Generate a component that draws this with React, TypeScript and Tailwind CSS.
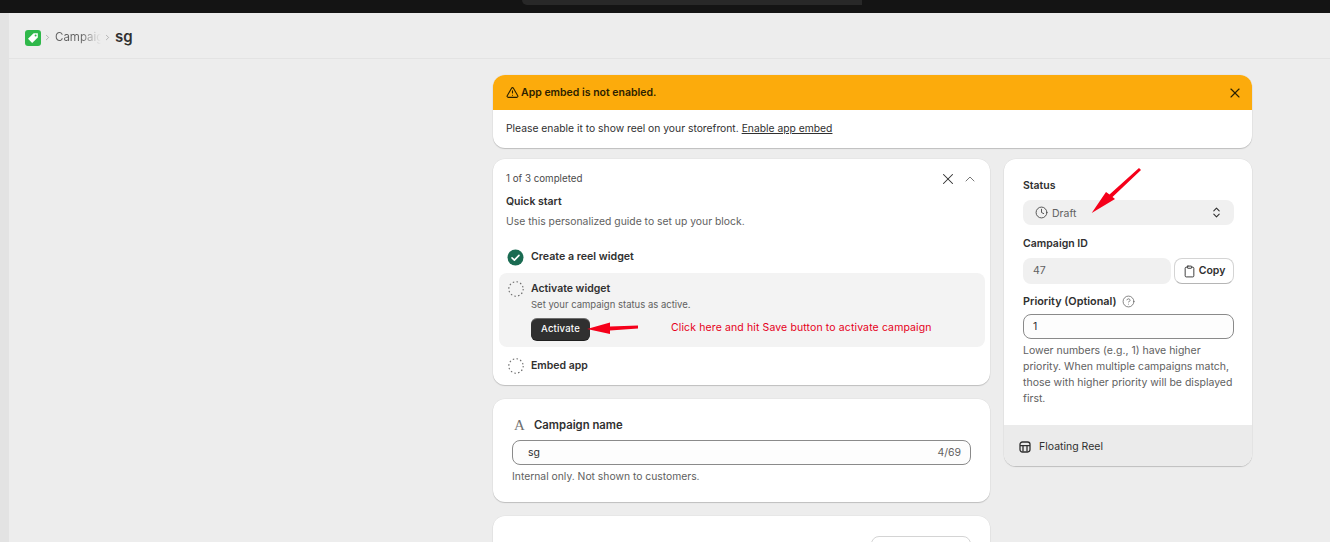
import React from 'react';
import { X, ChevronUp, ChevronRight, Clock, ChevronsUpDown, Clipboard, CircleHelp, TriangleAlert } from 'lucide-react';

const DashedCircle: React.FC = () => (
  <svg width="16" height="16" viewBox="0 0 16 16" fill="none" className="shrink-0">
    <circle cx="8" cy="8" r="7.2" stroke="#6b6b6b" strokeWidth="1.1" strokeDasharray="1.5 2.3" />
  </svg>
);

const Card: React.FC<{ className?: string; children: React.ReactNode }> = ({ className = '', children }) => (
  <div className={`bg-white rounded-xl shadow-[0_1px_1px_rgba(0,0,0,0.18),0_0_0_0.5px_rgba(0,0,0,0.05)] ${className}`}>{children}</div>
);

const Banner: React.FC = () => (
  <Card className="overflow-hidden h-[73px]">
    <div className="h-[35px] bg-[#fcab0c] flex items-center pl-[13px] pr-[9px]">
      <TriangleAlert size={13} strokeWidth={2} className="text-[#2b2100]" />
      <span className="ml-[2px] font-semibold text-[#2b2100]">App embed is not enabled.</span>
      <X size={16} strokeWidth={1.7} className="ml-auto text-[#2b2100]" />
    </div>
    <div className="h-[38px] flex items-center px-[13px] text-[10.32px] text-[#303030]">
      <span>Please enable it to show reel on your storefront.&nbsp;</span>
      <span className="underline">Enable app embed</span>
    </div>
  </Card>
);

const QuickStart: React.FC = () => (
  <Card className="h-[226px] pl-[6px] pr-[5px] pt-[13px]">
    <div className="flex items-center justify-between pl-[7px] pr-[7px] text-[9.75px] h-[14px] text-[#4a4a4a]">
      <span>1 of 3 completed</span>
      <div className="flex items-center gap-[5px]">
        <X size={18} strokeWidth={1.4} className="text-[#303030]" />
        <ChevronUp size={16} strokeWidth={1.3} className="text-[#616161]" />
      </div>
    </div>
    <div className="pl-[7px] mt-[8px] font-semibold text-[#303030] h-[16px] leading-[16px]">Quick start</div>
    <div className="pl-[7px] mt-[4px] text-[10.37px] text-[#616161] h-[16px] leading-[16px]">Use this personalized guide to set up your block.</div>
    <div className="pl-[8px] mt-[19px] flex items-center h-[16px]">
      <svg width="17" height="17" viewBox="0 0 17 17" className="shrink-0">
        <circle cx="8.5" cy="8.5" r="8" fill="#1a6b52" />
        <path d="M5 8.8l2.4 2.3L12 6.4" stroke="#fff" strokeWidth="1.6" fill="none" strokeLinecap="round" strokeLinejoin="round" />
      </svg>
      <span className="ml-[7px] font-semibold text-[10.65px] text-[#303030]">Create a reel widget</span>
    </div>
    <div className="mt-[8px] h-[74px] rounded-lg bg-[#f3f3f3] pl-[9px] pt-[7px] flex">
      <div className="pt-[1px]"><DashedCircle /></div>
      <div className="ml-[7px] pt-[1px]">
        <div className="font-semibold text-[#303030] h-[16px] leading-[16px]">Activate widget</div>
        <div className="text-[9.5px] text-[#616161] h-[16px] leading-[16px]">Set your campaign status as active.</div>
        <div className="mt-[5px] flex items-center">
          <button className="w-[59px] h-[22px] rounded-md bg-[#303030] text-white text-[9.5px] font-medium tracking-[0.2px] shadow-[inset_0_1px_0_rgba(255,255,255,0.3),0_1px_0_#1f1f1f]">Activate</button>
          <span className="ml-[81px] -mt-[3px] text-[#e6001a] text-[10.5px] tracking-[0.12px]">Click here and hit Save button to activate campaign</span>
        </div>
      </div>
    </div>
    <div className="pl-[9px] mt-[11px] flex items-center h-[16px]">
      <DashedCircle />
      <span className="ml-[7px] font-semibold text-[#303030]">Embed app</span>
    </div>
  </Card>
);

const CampaignName: React.FC = () => (
  <Card className="h-[103px] px-[19px] pt-[18px]">
    <div className="flex items-center h-[16px]">
      <span className="text-[15px] text-[#707070] font-['Liberation_Serif',serif] w-[22px] pl-[2px]">A</span>
      <span className="font-semibold text-[#303030] text-[11.3px]">Campaign name</span>
    </div>
    <div className="mt-[7px] h-[25px] rounded-lg border border-[#8a8a8a] bg-[#fdfdfd] flex items-center justify-between pl-[15px] pr-[9px] text-[#303030]">
      <span>sg</span>
      <span className="text-[#616161]">4/69</span>
    </div>
    <div className="mt-[3px] text-[10.33px] text-[#616161] h-[16px] leading-[16px]">Internal only. Not shown to customers.</div>
  </Card>
);

const SideCard: React.FC = () => (
  <Card className="w-[248px] h-[307px] overflow-hidden flex flex-col">
    <div className="flex-1 pl-[19px] pr-[18px] pt-[19px]">
      <div className="font-semibold text-[#303030] h-[16px] leading-[16px]">Status</div>
      <div className="mt-[6px] h-[25px] rounded-lg bg-[#f0f0f0] flex items-center pl-[12px] pr-[11px] text-[#616161]">
        <Clock size={13} strokeWidth={1.7} className="text-[#4a4a4a]" />
        <span className="ml-[4px] mt-[2px]">Draft</span>
        <ChevronsUpDown size={13} strokeWidth={2} className="ml-auto text-[#303030]" />
      </div>
      <div className="mt-[11px] font-semibold text-[#303030] h-[16px] leading-[16px]">Campaign ID</div>
      <div className="mt-[6px] flex gap-[3px]">
        <div className="w-[148px] h-[26px] rounded-lg bg-[#f0f0f0] flex items-center pl-[10px] text-[#616161]">47</div>
        <button className="w-[60px] h-[26px] rounded-lg bg-white border border-[#d4d4d4] border-b-[#b5b5b5] flex items-center justify-center gap-[3px] font-semibold text-[#303030]">
          <Clipboard size={13} strokeWidth={1.7} />
          Copy
        </button>
      </div>
      <div className="mt-[9px] flex items-center font-semibold text-[10.85px] text-[#303030] h-[16px]">
        Priority (Optional)
        <CircleHelp size={13} strokeWidth={1.4} className="ml-[5px] text-[#616161]" />
      </div>
      <div className="mt-[5px] h-[25px] rounded-lg border border-[#8a8a8a] bg-[#fdfdfd] flex items-center pl-[9px] text-[#303030]">1</div>
      <p className="mt-[4px] text-[#616161] leading-[16px]">Lower numbers (e.g., 1) have higher priority. When multiple campaigns match, those with higher priority will be displayed first.</p>
    </div>
    <div className="h-[41px] bg-[#ebebeb] flex items-center pl-[15px] pt-[2px] text-[#303030]">
      <svg width="12" height="12" viewBox="0 0 12 12" fill="none" stroke="#303030" strokeWidth="1.3">
        <rect x="1" y="1" width="10" height="10" rx="2.4" />
        <path d="M1 4.6h10M4 4.6v6M8 4.6v6" />
      </svg>
      <span className="ml-[8px]">Floating Reel</span>
    </div>
  </Card>
);

// red arrows drawn over the page
const Arrows: React.FC = () => (
  <>
    <svg className="absolute left-[585px] top-[318px]" width="56" height="20" viewBox="0 0 56 20" fill="#f5001a">
      <path d="M2 11 L25 4.5 L25 8.5 L53 7.5 L53 10.5 L25 12.5 L25 16 Z" />
    </svg>
    <svg className="absolute left-[1085px] top-[163px]" width="60" height="56" viewBox="0 0 60 56" fill="#f5001a">
      <path d="M6.7 50 L21 29 L24.5 31.5 L54 5 L56 7 L27.5 34 L30 36 Z" />
    </svg>
  </>
);

export default function App() {
  return (
    <div className="relative w-[1330px] h-[542px] overflow-hidden bg-[#ededed] font-['Inter',sans-serif] text-[10.5px]">
      <div className="h-[13px] bg-[#141414] pl-[522px]">
        <div className="w-[340px] h-[5px] bg-[#282828] rounded-bl-lg" />
      </div>
      <div className="flex h-[529px]">
        <div className="w-[9px] shrink-0 bg-[#e3e3e3]" />
        <div className="flex-1 min-w-0">
          <header className="h-[46px] border-b border-[#e3e3e3] flex items-center pl-[16px] pt-[4px] text-[#616161]">
            <span className="w-[16px] h-[16px] rounded-[3px] bg-[#2fb84a]">
              <svg width="16" height="16" viewBox="0 0 16 16">
                <path d="M8.6 3.2h4.2v4.2l-5.6 5.6-4.2-4.2z" fill="#fff" />
                <circle cx="10.6" cy="5.4" r="1" fill="#2fb84a" />
              </svg>
            </span>
            <ChevronRight size={9} strokeWidth={1.5} className="ml-[2px] text-[#8a8a8a]" />
            <span className="ml-[3px] w-[46px] overflow-hidden whitespace-nowrap text-[11.5px] bg-gradient-to-r from-[#616161] from-55% to-transparent bg-clip-text text-transparent">Campaigns</span>
            <ChevronRight size={9} strokeWidth={1.5} className="ml-[2px] text-[#8a8a8a]" />
            <span className="ml-[3px] text-[15px] font-semibold text-[#303030]">sg</span>
          </header>
          <main className="pl-[484px] pt-[16px] w-[1243px]">
            <Banner />
            <div className="mt-[11px] flex gap-[14px] items-start">
              <div className="w-[497px] flex flex-col gap-[14px] shrink-0">
                <QuickStart />
                <CampaignName />
                <Card className="h-[120px] px-[19px] pt-[19px]">
                  <div className="flex items-center justify-between">
                    <span className="mt-[4px] font-semibold text-[#303030] text-[11.5px]">Auto block</span>
                    <button className="w-[100px] h-[20px] pt-[4px] rounded-t-lg bg-white border border-[#d4d4d4] font-semibold text-[#303030]">Add Widget</button>
                  </div>
                </Card>
              </div>
              <SideCard />
            </div>
          </main>
        </div>
      </div>
      <Arrows />
    </div>
  );
}
